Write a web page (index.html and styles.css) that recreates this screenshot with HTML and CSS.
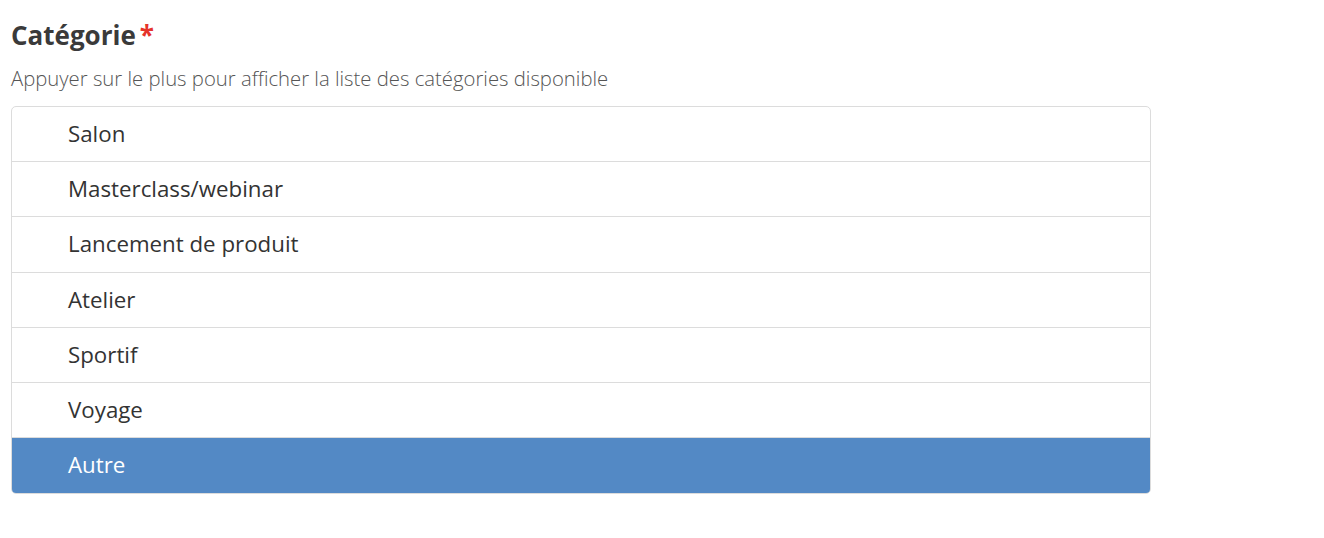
FILE: index.html
```html
<!DOCTYPE html>
<html lang="fr">
<head>
<meta charset="utf-8">
<title>Catégorie</title>
<link rel="stylesheet" href="styles.css">
</head>
<body>
<div class="field">
  <div class="label">Catégorie<span class="req">*</span></div>
  <div class="help">Appuyer sur le plus pour afficher la liste des catégories disponible</div>
  <ul class="list">
    <li class="item">Salon</li>
    <li class="item">Masterclass/webinar</li>
    <li class="item">Lancement de produit</li>
    <li class="item">Atelier</li>
    <li class="item">Sportif</li>
    <li class="item">Voyage</li>
    <li class="item selected">Autre</li>
  </ul>
</div>
</body>
</html>
```
FILE: styles.css
```css
html, body {
  margin: 0;
  padding: 0;
  background: #fff;
}
body {
  font-family: "Open Sans", "Liberation Sans", sans-serif;
  color: #333;
}
.field {
  width: 1140px;
  padding: 17px 0 0 11px;
}
.label {
  font-size: 26px;
  font-weight: 700;
  line-height: 36px;
  color: #3a3a3a;
}
.req {
  color: #e5332a;
  margin-left: 4px;
}
.help {
  margin-top: 11px;
  font-size: 20.3px;
  font-weight: 300;
  line-height: 28px;
  color: #555;
}
.list {
  list-style: none;
  margin: 14px 0 0 0;
  padding: 0;
  border: 1px solid #dcdcdc;
  border-radius: 5px;
  overflow: hidden;
}
.item {
  box-sizing: border-box;
  height: 55.2px;
  padding: 12px 56px 0 56px;
  font-size: 22.3px;
  line-height: 30px;
  color: #333;
  border-bottom: 1px solid #dcdcdc;
}
.item:last-child {
  border-bottom: none;
}
.item.selected {
  background: #5389c5;
  color: #fff;
}
```
